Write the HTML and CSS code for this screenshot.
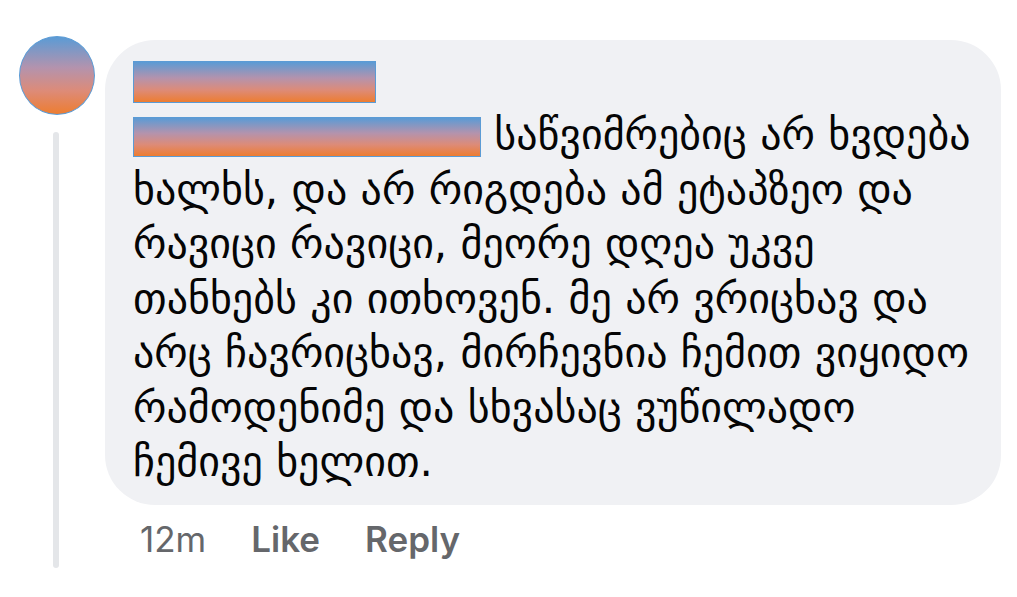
FILE: index.html
```html
<!DOCTYPE html>
<html lang="ka">
<head>
<meta charset="utf-8">
<title>Comment</title>
<link rel="stylesheet" href="styles.css">
</head>
<body>
<div class="comment">
  <div class="side">
    <div class="avatar"></div>
    <div class="thread"></div>
  </div>
  <div class="main">
    <div class="bubble">
      <div class="name"><span class="redact redact-name"></span></div>
      <p class="text"><span class="redact redact-tag"></span> საწვიმრებიც არ ხვდება ხალხს, და არ რიგდება ამ ეტაპზეო და რავიცი რავიცი, მეორე დღეა უკვე თანხებს კი ითხოვენ. მე არ ვრიცხავ და არც ჩავრიცხავ, მირჩევნია ჩემით ვიყიდო რამოდენიმე და სხვასაც ვუწილადო ჩემივე ხელით.</p>
    </div>
    <div class="actions">
      <span class="time">12m</span>
      <span class="action">Like</span>
      <span class="action">Reply</span>
    </div>
  </div>
</div>
</body>
</html>
```
FILE: styles.css
```css
html, body {
  margin: 0;
  padding: 0;
  background: #ffffff;
}

.comment {
  display: flex;
  align-items: flex-start;
  padding: 36px 0 0 19px;
  width: 1017px;
  box-sizing: border-box;
}

.side {
  width: 76px;
  display: flex;
  flex-direction: column;
  align-items: center;
  flex-shrink: 0;
}

.avatar {
  width: 74px;
  height: 77px;
  border-radius: 50%;
  border: 1px solid #5b9bd5;
  background: linear-gradient(to bottom, #5b9bd5 0%, #b493ad 40%, #dd8b78 70%, #ed7d31 100%);
}

.thread {
  width: 6px;
  height: 436px;
  margin-top: 17px;
  margin-left: -3px;
  background: #e4e6e9;
  border-radius: 3px;
}

.main {
  margin-left: 10px;
  margin-top: 4px;
  display: flex;
  flex-direction: column;
}

.bubble {
  width: 896px;
  box-sizing: border-box;
  background: #f0f1f4;
  border-radius: 50px;
  padding: 21px 14px 15px 28px;
}

.name {
  height: 42px;
  margin-bottom: 5px;
}

.redact {
  display: inline-block;
  box-sizing: border-box;
  border: 1px solid #5b9bd5;
  background: linear-gradient(to bottom, #5b9bd5 0%, #b493ad 40%, #dd8b78 70%, #ed7d31 100%);
}

.redact-name {
  width: 243px;
  height: 42px;
}

.redact-tag {
  width: 348px;
  height: 40px;
  vertical-align: -8px;
}

.text {
  margin: 0;
  font-family: "DejaVu Sans", sans-serif;
  font-size: 42px;
  line-height: 54.5px;
  color: #050505;
}

.actions {
  display: flex;
  gap: 45px;
  padding-left: 35px;
  margin-top: 13px;
  font-family: Inter, "Liberation Sans", sans-serif;
  font-size: 35px;
  line-height: 42px;
  color: #65676b;
}

.action {
  font-weight: 600;
}
```
